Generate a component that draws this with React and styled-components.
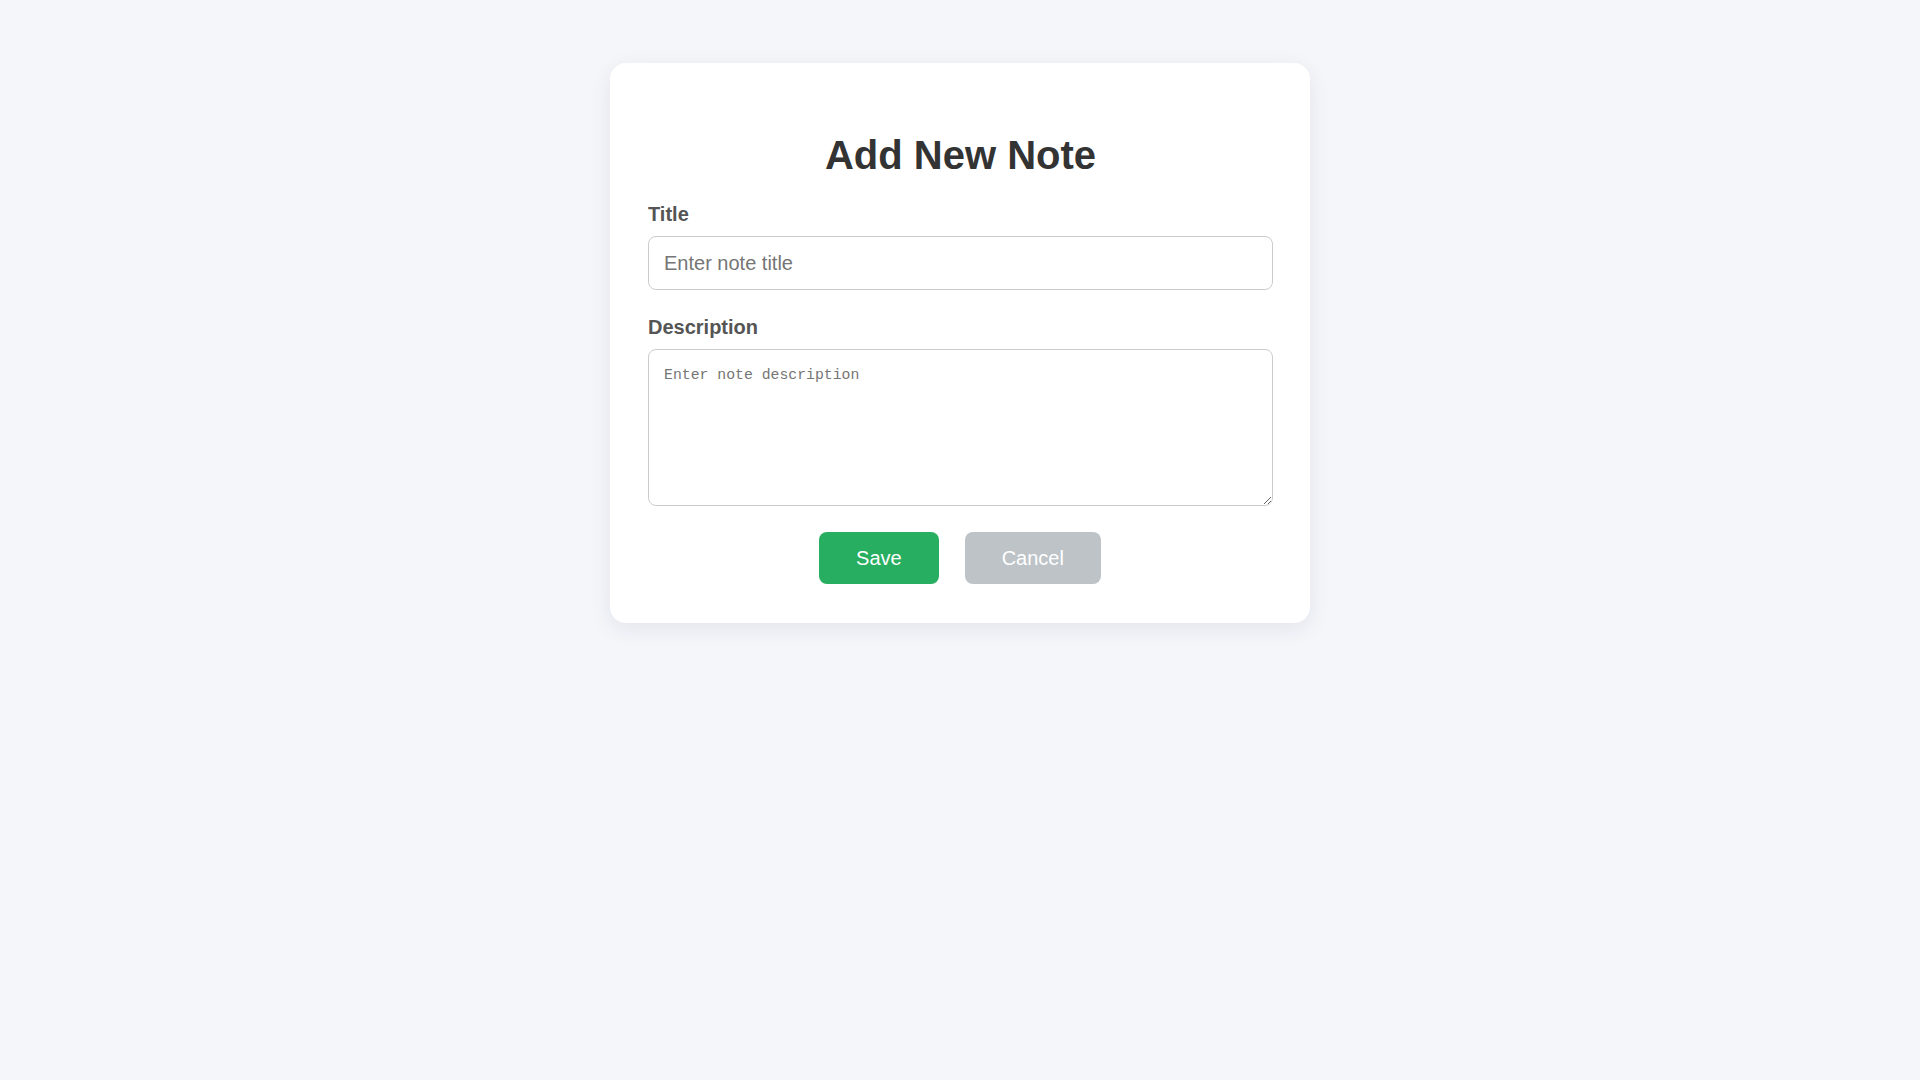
import React from "react";
import styled, { createGlobalStyle } from "styled-components";

const GlobalStyle = createGlobalStyle`
  * { box-sizing: border-box; }
  html, body {
    margin: 0;
    padding: 0;
    background: #f5f6fa;
    font-family: "Liberation Sans", Arial, sans-serif;
  }
  body { min-height: 1080px; }
`;

const Page = styled.div`
  display: flex;
  justify-content: center;
  padding-top: 63px;
`;

const Card = styled.form`
  width: 700px;
  background: #ffffff;
  border-radius: 16px;
  padding: 38px 37px 39px 38px;
  box-shadow: 0 6px 22px rgba(20, 30, 60, 0.08);
`;

const Heading = styled.h2`
  margin: 31px 0 25px;
  text-align: center;
  font-size: 40px;
  font-weight: 700;
  color: #333333;
  line-height: 46px;
`;

const Group = styled.div`
  display: flex;
  flex-direction: column;
  margin-bottom: ${(p) => p.$gap}px;
`;

const Label = styled.label`
  display: block;
  font-size: 20px;
  font-weight: 700;
  color: #555555;
  line-height: 23px;
  margin-bottom: 10px;
`;

const Input = styled.input`
  width: 100%;
  height: 54px;
  padding: 0 15px;
  border: 1px solid #cccccc;
  border-radius: 8px;
  font-family: "Liberation Sans", Arial, sans-serif;
  font-size: 20px;
  color: #333;
  outline: none;
  &::placeholder { color: #757575; }
`;

const TextArea = styled.textarea`
  width: 100%;
  height: 157px;
  padding: 17px 15px 15px;
  border: 1px solid #cccccc;
  border-radius: 8px;
  font-family: "Liberation Mono", "DejaVu Sans Mono", monospace;
  font-size: 14.8px;
  color: #333;
  outline: none;
  display: block;
  &::placeholder { color: #757575; }
`;

const Actions = styled.div`
  display: flex;
  justify-content: center;
  gap: 26px;
  padding-right: 1px;
`;

const Button = styled.button`
  height: 52px;
  padding: 0 37px;
  border: none;
  border-radius: 8px;
  background: ${(p) => p.$bg};
  color: #ffffff;
  font-family: "Liberation Sans", Arial, sans-serif;
  font-size: 20px;
  cursor: pointer;
`;

export default function App() {
  return (
    <>
      <GlobalStyle />
      <Page>
        <Card onSubmit={(e) => e.preventDefault()}>
          <Heading>Add New Note</Heading>
          <Group $gap={26}>
            <Label htmlFor="title">Title</Label>
            <Input id="title" type="text" placeholder="Enter note title" />
          </Group>
          <Group $gap={26}>
            <Label htmlFor="desc">Description</Label>
            <TextArea id="desc" placeholder="Enter note description" />
          </Group>
          <Actions>
            <Button type="submit" $bg="#27ae60">Save</Button>
            <Button type="button" $bg="#bdc3c7">Cancel</Button>
          </Actions>
        </Card>
      </Page>
    </>
  );
}
